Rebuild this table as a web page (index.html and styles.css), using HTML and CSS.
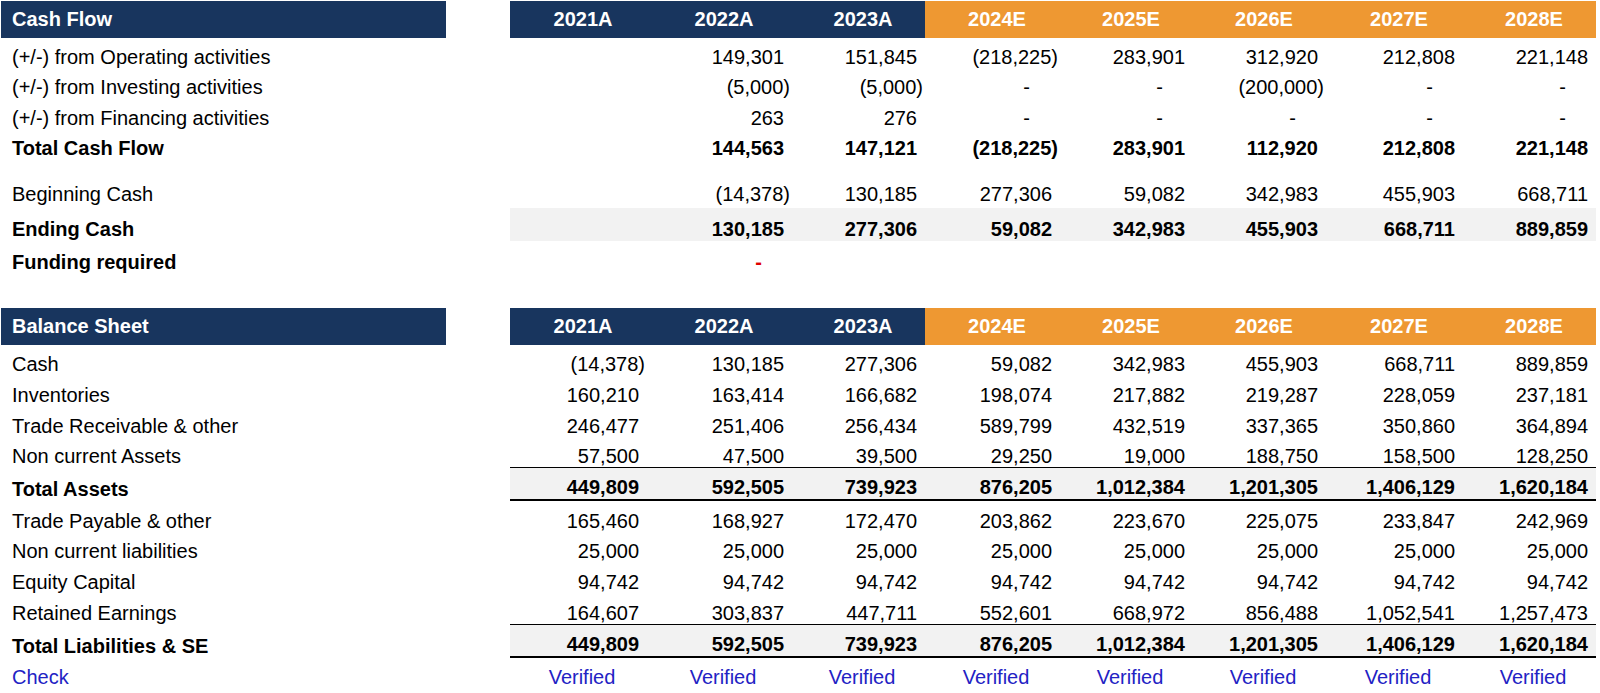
FILE: index.html
```html
<!DOCTYPE html>
<html lang="en">
<head>
<meta charset="utf-8">
<title>Cash Flow &amp; Balance Sheet</title>
<link rel="stylesheet" href="styles.css">
</head>
<body>
<div class="sheet">
  <section class="block cf">
    <div class="row hdr">
      <div class="lbl">Cash Flow</div><div class="gap"></div>
      <div class="c act">2021A</div><div class="c act">2022A</div><div class="c act">2023A</div>
      <div class="c est">2024E</div><div class="c est">2025E</div><div class="c est">2026E</div><div class="c est">2027E</div><div class="c est">2028E</div>
    </div>
    <div class="row">
      <div class="lbl">(+/-) from Operating activities</div><div class="gap"></div>
      <div class="v"></div><div class="v">149,301</div><div class="v">151,845</div><div class="v neg">(218,225)</div><div class="v">283,901</div><div class="v">312,920</div><div class="v">212,808</div><div class="v">221,148</div>
    </div>
    <div class="row">
      <div class="lbl">(+/-) from Investing activities</div><div class="gap"></div>
      <div class="v"></div><div class="v neg">(5,000)</div><div class="v neg">(5,000)</div><div class="v dash">-</div><div class="v dash">-</div><div class="v neg">(200,000)</div><div class="v dash">-</div><div class="v dash">-</div>
    </div>
    <div class="row">
      <div class="lbl">(+/-) from Financing activities</div><div class="gap"></div>
      <div class="v"></div><div class="v">263</div><div class="v">276</div><div class="v dash">-</div><div class="v dash">-</div><div class="v dash">-</div><div class="v dash">-</div><div class="v dash">-</div>
    </div>
    <div class="row bold">
      <div class="lbl">Total Cash Flow</div><div class="gap"></div>
      <div class="v"></div><div class="v">144,563</div><div class="v">147,121</div><div class="v neg">(218,225)</div><div class="v">283,901</div><div class="v">112,920</div><div class="v">212,808</div><div class="v">221,148</div>
    </div>
    <div class="spacer-s"></div>
    <div class="row begin">
      <div class="lbl">Beginning Cash</div><div class="gap"></div>
      <div class="v"></div><div class="v neg">(14,378)</div><div class="v">130,185</div><div class="v">277,306</div><div class="v">59,082</div><div class="v">342,983</div><div class="v">455,903</div><div class="v">668,711</div>
    </div>
    <div class="row bold band">
      <div class="lbl">Ending Cash</div><div class="gap"></div>
      <div class="v"></div><div class="v">130,185</div><div class="v">277,306</div><div class="v">59,082</div><div class="v">342,983</div><div class="v">455,903</div><div class="v">668,711</div><div class="v">889,859</div>
    </div>
    <div class="row bold funding">
      <div class="lbl">Funding required</div><div class="gap"></div>
      <div class="v"></div><div class="v dash red">-</div><div class="v"></div><div class="v"></div><div class="v"></div><div class="v"></div><div class="v"></div><div class="v"></div>
    </div>
  </section>

  <section class="block bs">
    <div class="row hdr">
      <div class="lbl">Balance Sheet</div><div class="gap"></div>
      <div class="c act">2021A</div><div class="c act">2022A</div><div class="c act">2023A</div>
      <div class="c est">2024E</div><div class="c est">2025E</div><div class="c est">2026E</div><div class="c est">2027E</div><div class="c est">2028E</div>
    </div>
    <div class="row">
      <div class="lbl">Cash</div><div class="gap"></div>
      <div class="v neg">(14,378)</div><div class="v">130,185</div><div class="v">277,306</div><div class="v">59,082</div><div class="v">342,983</div><div class="v">455,903</div><div class="v">668,711</div><div class="v">889,859</div>
    </div>
    <div class="row">
      <div class="lbl">Inventories</div><div class="gap"></div>
      <div class="v">160,210</div><div class="v">163,414</div><div class="v">166,682</div><div class="v">198,074</div><div class="v">217,882</div><div class="v">219,287</div><div class="v">228,059</div><div class="v">237,181</div>
    </div>
    <div class="row">
      <div class="lbl">Trade Receivable &amp; other</div><div class="gap"></div>
      <div class="v">246,477</div><div class="v">251,406</div><div class="v">256,434</div><div class="v">589,799</div><div class="v">432,519</div><div class="v">337,365</div><div class="v">350,860</div><div class="v">364,894</div>
    </div>
    <div class="row">
      <div class="lbl">Non current Assets</div><div class="gap"></div>
      <div class="v">57,500</div><div class="v">47,500</div><div class="v">39,500</div><div class="v">29,250</div><div class="v">19,000</div><div class="v">188,750</div><div class="v">158,500</div><div class="v">128,250</div>
    </div>
    <div class="row bold total">
      <div class="lbl">Total Assets</div><div class="gap"></div>
      <div class="v">449,809</div><div class="v">592,505</div><div class="v">739,923</div><div class="v">876,205</div><div class="v">1,012,384</div><div class="v">1,201,305</div><div class="v">1,406,129</div><div class="v">1,620,184</div>
    </div>
    <div class="row">
      <div class="lbl">Trade Payable &amp; other</div><div class="gap"></div>
      <div class="v">165,460</div><div class="v">168,927</div><div class="v">172,470</div><div class="v">203,862</div><div class="v">223,670</div><div class="v">225,075</div><div class="v">233,847</div><div class="v">242,969</div>
    </div>
    <div class="row">
      <div class="lbl">Non current liabilities</div><div class="gap"></div>
      <div class="v">25,000</div><div class="v">25,000</div><div class="v">25,000</div><div class="v">25,000</div><div class="v">25,000</div><div class="v">25,000</div><div class="v">25,000</div><div class="v">25,000</div>
    </div>
    <div class="row">
      <div class="lbl">Equity Capital</div><div class="gap"></div>
      <div class="v">94,742</div><div class="v">94,742</div><div class="v">94,742</div><div class="v">94,742</div><div class="v">94,742</div><div class="v">94,742</div><div class="v">94,742</div><div class="v">94,742</div>
    </div>
    <div class="row">
      <div class="lbl">Retained Earnings</div><div class="gap"></div>
      <div class="v">164,607</div><div class="v">303,837</div><div class="v">447,711</div><div class="v">552,601</div><div class="v">668,972</div><div class="v">856,488</div><div class="v">1,052,541</div><div class="v">1,257,473</div>
    </div>
    <div class="row bold total">
      <div class="lbl">Total Liabilities &amp; SE</div><div class="gap"></div>
      <div class="v">449,809</div><div class="v">592,505</div><div class="v">739,923</div><div class="v">876,205</div><div class="v">1,012,384</div><div class="v">1,201,305</div><div class="v">1,406,129</div><div class="v">1,620,184</div>
    </div>
    <div class="row check">
      <div class="lbl">Check</div><div class="gap"></div>
      <div class="v ok">Verified</div><div class="v ok">Verified</div><div class="v ok">Verified</div><div class="v ok">Verified</div><div class="v ok">Verified</div><div class="v ok">Verified</div><div class="v ok">Verified</div><div class="v ok">Verified</div>
    </div>
  </section>
</div>
</body>
</html>
```

FILE: styles.css
```css
* { box-sizing: border-box; }

html, body {
  margin: 0;
  background: #ffffff;
}

body {
  padding: 1px 0 0 1px;
  font-family: "Liberation Sans", Arial, sans-serif;
  font-size: 20px;
  color: #000000;
}

.sheet {
  width: 1595px;
}

.block.cf {
  padding-bottom: 36px;
}

.row {
  display: grid;
  grid-template-columns: 445px 64px 137px 145px 133px 135px 133px 133px 137px 133px;
  height: 30.6px;
  line-height: 23px;
}

.row > div {
  display: flex;
  align-items: flex-end;
  white-space: nowrap;
}

.lbl {
  padding-left: 11px;
}

.v {
  justify-content: flex-end;
  padding-right: 8px;
}

.v.neg {
  padding-right: 2px;
}

.v.dash {
  padding-right: 30px;
}

.red {
  color: #e00000;
}

.bold {
  font-weight: bold;
}

/* header bars */
.row.hdr {
  height: 37px;
  font-weight: bold;
  color: #ffffff;
}

.row.hdr > div {
  align-items: center;
}

.hdr .lbl {
  background: #18355e;
}

.hdr .c {
  justify-content: center;
  padding-left: 9px;
}

.hdr .act {
  background: #18355e;
}

.hdr .est {
  background: #ee9832;
}

.spacer-s {
  height: 14.8px;
}

.row.begin {
  height: 33px;
}

.row.begin > div {
  padding-bottom: 2px;
}

.row.band {
  height: 33px;
}

.row.band > div {
  padding-bottom: 0;
}

.row.band .v {
  background: #f2f2f2;
}

.row.funding {
  line-height: 19px;
}

.block.bs .row {
  line-height: 21px;
}

.block.bs .row.hdr {
  height: 37px;
  line-height: 23px;
}

.row.total {
  height: 34px;
}

.row.total .v {
  background: #f2f2f2;
  border-top: 1px solid #000000;
  border-bottom: 2px solid #000000;
  padding-bottom: 1px;
}

.row.total .lbl {
  padding-bottom: 1px;
}

.row.check {
  color: #2222c4;
}

.v.ok {
  justify-content: center;
  padding-right: 0;
  padding-left: 7px;
}
```
